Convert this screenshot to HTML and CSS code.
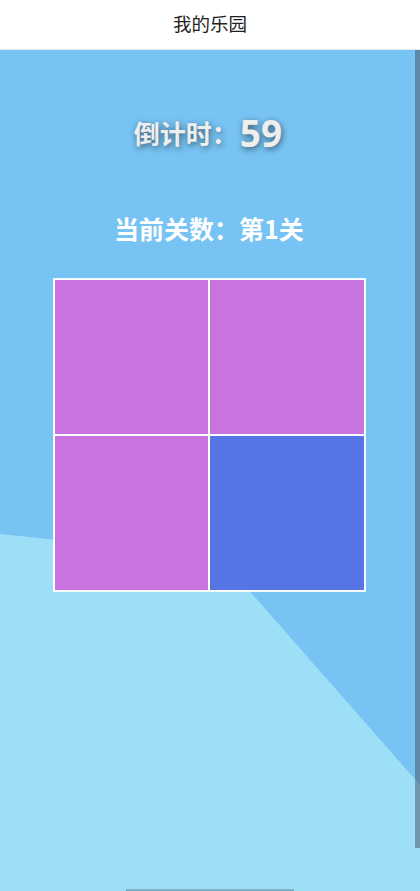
FILE: index.html
```html
<!DOCTYPE html>
<html lang="zh">
<head>
<meta charset="utf-8">
<title>我的乐园</title>
<link rel="stylesheet" href="styles.css">
</head>
<body>
<div class="app">
  <header class="navbar">
    <span class="nav-title">我的乐园</span>
  </header>
  <main class="stage">
    <svg class="wave" viewBox="0 0 420 841" preserveAspectRatio="none" aria-hidden="true">
      <path d="M0 484 Q 120 496 205 510 Q 222 514 240 530 L 420 735 L 420 841 L 0 841 Z" fill="#9ddff7"/>
    </svg>
    <div class="timer">
      <span class="timer-label">倒计时：</span><span class="timer-num">59</span>
    </div>
    <div class="level">当前关数：第1关</div>
    <div class="board">
      <div class="cell purple"></div>
      <div class="cell purple"></div>
      <div class="cell purple"></div>
      <div class="cell blue"></div>
    </div>
    <div class="scrollbar"></div>
    <div class="home-bar"></div>
  </main>
</div>
</body>
</html>
```
FILE: styles.css
```css
* { box-sizing: border-box; }
html, body {
  margin: 0;
  padding: 0;
  width: 420px;
  height: 891px;
  overflow: hidden;
  font-family: "Noto Sans", "Noto Sans CJK SC", sans-serif;
}
.app {
  display: flex;
  flex-direction: column;
  height: 891px;
}
.navbar {
  height: 50px;
  flex: none;
  background: #ffffff;
  border-bottom: 1px solid #e2e6ea;
  display: flex;
  align-items: center;
  justify-content: center;
}
.nav-title {
  font-size: 18.5px;
  color: #222222;
  font-family: "Noto Sans CJK SC", sans-serif;
  margin-top: -4px;
}
.stage {
  position: relative;
  flex: 1;
  background: #77c3f3;
  display: flex;
  flex-direction: column;
  align-items: center;
  padding-top: 56px;
  padding-right: 2px;
  overflow: hidden;
}
.wave {
  position: absolute;
  left: 0;
  top: 0;
  width: 420px;
  height: 841px;
  z-index: 0;
}
.timer {
  position: relative;
  z-index: 1;
  height: 50px;
  line-height: 50px;
  color: #eeeeee;
  font-weight: 700;
  text-shadow: 1px 2px 6px rgba(0, 0, 0, 0.55);
  white-space: nowrap;
  margin-right: 2px;
}
.timer-label {
  font-size: 26px;
  font-family: "Noto Sans CJK SC", sans-serif;
  vertical-align: middle;
}
.timer-num {
  font-size: 37px;
  vertical-align: middle;
  font-family: "Open Sans", "Noto Sans", sans-serif;
  margin-left: 2px;
}
.level {
  position: relative;
  z-index: 1;
  margin-top: 55px;
  height: 34px;
  line-height: 34px;
  font-size: 25px;
  font-weight: 700;
  color: #ffffff;
  font-family: "Noto Sans CJK SC", sans-serif;
  white-space: nowrap;
}
.board {
  position: relative;
  z-index: 1;
  margin-top: 33px;
  width: 313px;
  display: grid;
  grid-template-columns: 1fr 1fr;
  border: 0.5px solid rgba(255, 255, 255, 0.9);
}
.cell {
  height: 156px;
  border: 1px solid #ffffff;
}
.purple { background: #c873e0; }
.blue { background: #5475e3; }
.scrollbar {
  position: absolute;
  right: 0;
  top: 0;
  width: 5px;
  height: 798px;
  background: rgba(70, 80, 95, 0.5);
  z-index: 2;
}
.home-bar {
  position: absolute;
  left: 126px;
  bottom: 0;
  width: 168px;
  height: 2px;
  background: #7ab0c6;
  z-index: 2;
}
```
